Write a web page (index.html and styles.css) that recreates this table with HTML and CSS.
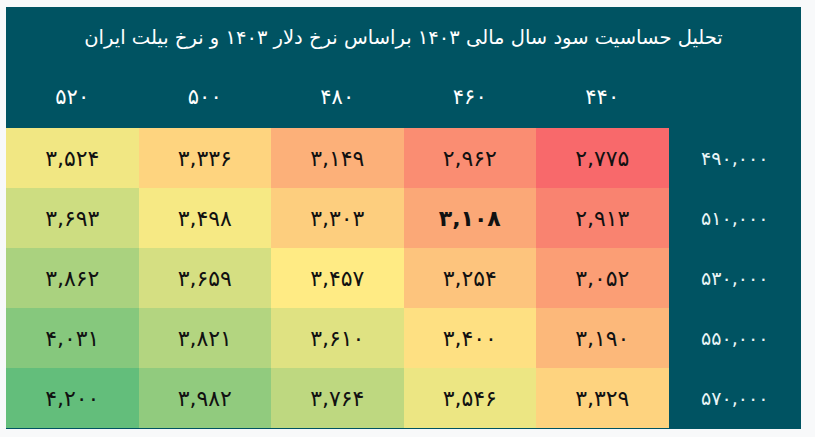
FILE: index.html
```html
<!DOCTYPE html>
<html lang="fa" dir="rtl">
<head>
<meta charset="utf-8">
<title>تحلیل حساسیت</title>
<link rel="stylesheet" href="styles.css">
</head>
<body>
<div class="page">
  <section class="panel">
    <h1 class="title">تحلیل حساسیت سود سال مالی ۱۴۰۳ براساس نرخ دلار ۱۴۰۳ و نرخ بیلت ایران</h1>
    <div class="grid">
      <div class="head"></div>
      <div class="head">۴۴۰</div>
      <div class="head">۴۶۰</div>
      <div class="head">۴۸۰</div>
      <div class="head">۵۰۰</div>
      <div class="head">۵۲۰</div>

      <div class="rowhead">۴۹۰,۰۰۰</div>
      <div class="cell" style="background:#f8696b">۲,۷۷۵</div>
      <div class="cell" style="background:#fa8d72">۲,۹۶۲</div>
      <div class="cell" style="background:#fcb079">۳,۱۴۹</div>
      <div class="cell" style="background:#fed47f">۳,۳۳۶</div>
      <div class="cell" style="background:#f1e783">۳,۵۲۴</div>

      <div class="rowhead">۵۱۰,۰۰۰</div>
      <div class="cell" style="background:#f98370">۲,۹۱۳</div>
      <div class="cell bold" style="background:#fba877">۳,۱۰۸</div>
      <div class="cell" style="background:#fdce7e">۳,۳۰۳</div>
      <div class="cell" style="background:#f6e984">۳,۴۹۸</div>
      <div class="cell" style="background:#cddd81">۳,۶۹۳</div>

      <div class="rowhead">۵۳۰,۰۰۰</div>
      <div class="cell" style="background:#fb9e75">۳,۰۵۲</div>
      <div class="cell" style="background:#fdc47d">۳,۲۵۴</div>
      <div class="cell" style="background:#ffeb84">۳,۴۵۷</div>
      <div class="cell" style="background:#d5df82">۳,۶۵۹</div>
      <div class="cell" style="background:#aad27f">۳,۸۶۲</div>

      <div class="rowhead">۵۵۰,۰۰۰</div>
      <div class="cell" style="background:#fcb87a">۳,۱۹۰</div>
      <div class="cell" style="background:#fee082">۳,۴۰۰</div>
      <div class="cell" style="background:#dfe282">۳,۶۱۰</div>
      <div class="cell" style="background:#b3d580">۳,۸۲۱</div>
      <div class="cell" style="background:#86c87d">۴,۰۳۱</div>

      <div class="rowhead">۵۷۰,۰۰۰</div>
      <div class="cell" style="background:#fed37f">۳,۳۲۹</div>
      <div class="cell" style="background:#ece683">۳,۵۴۶</div>
      <div class="cell" style="background:#bed880">۳,۷۶۴</div>
      <div class="cell" style="background:#91cb7e">۳,۹۸۲</div>
      <div class="cell" style="background:#63be7b">۴,۲۰۰</div>
    </div>
  </section>
</div>
</body>
</html>
```

FILE: styles.css
```css
html, body {
  margin: 0;
  padding: 0;
  background: #f8f9fa;
}

body {
  font-family: "DejaVu Sans", sans-serif;
}

.page {
  width: 815px;
  height: 437px;
  padding: 7px 14px 0 6px;
  box-sizing: border-box;
}

.panel {
  width: 795px;
  height: 422px;
  background: #005362;
  display: flex;
  flex-direction: column;
}

.title {
  margin: 0;
  height: 59px;
  display: flex;
  align-items: center;
  justify-content: center;
  color: #ffffff;
  font-size: 19.5px;
  font-weight: normal;
  padding-top: 2px;
  box-sizing: border-box;
}

.grid {
  display: grid;
  grid-template-columns: repeat(6, 1fr);
  grid-template-rows: 62px repeat(5, 60px);
}

.head,
.rowhead,
.cell {
  display: flex;
  align-items: center;
  justify-content: center;
}

.head {
  color: #ffffff;
  font-size: 21px;
}

.rowhead {
  color: #eaf5f7;
  font-size: 19px;
}

.cell {
  color: #111111;
  font-size: 22px;
}

.bold {
  font-weight: bold;
}
```
